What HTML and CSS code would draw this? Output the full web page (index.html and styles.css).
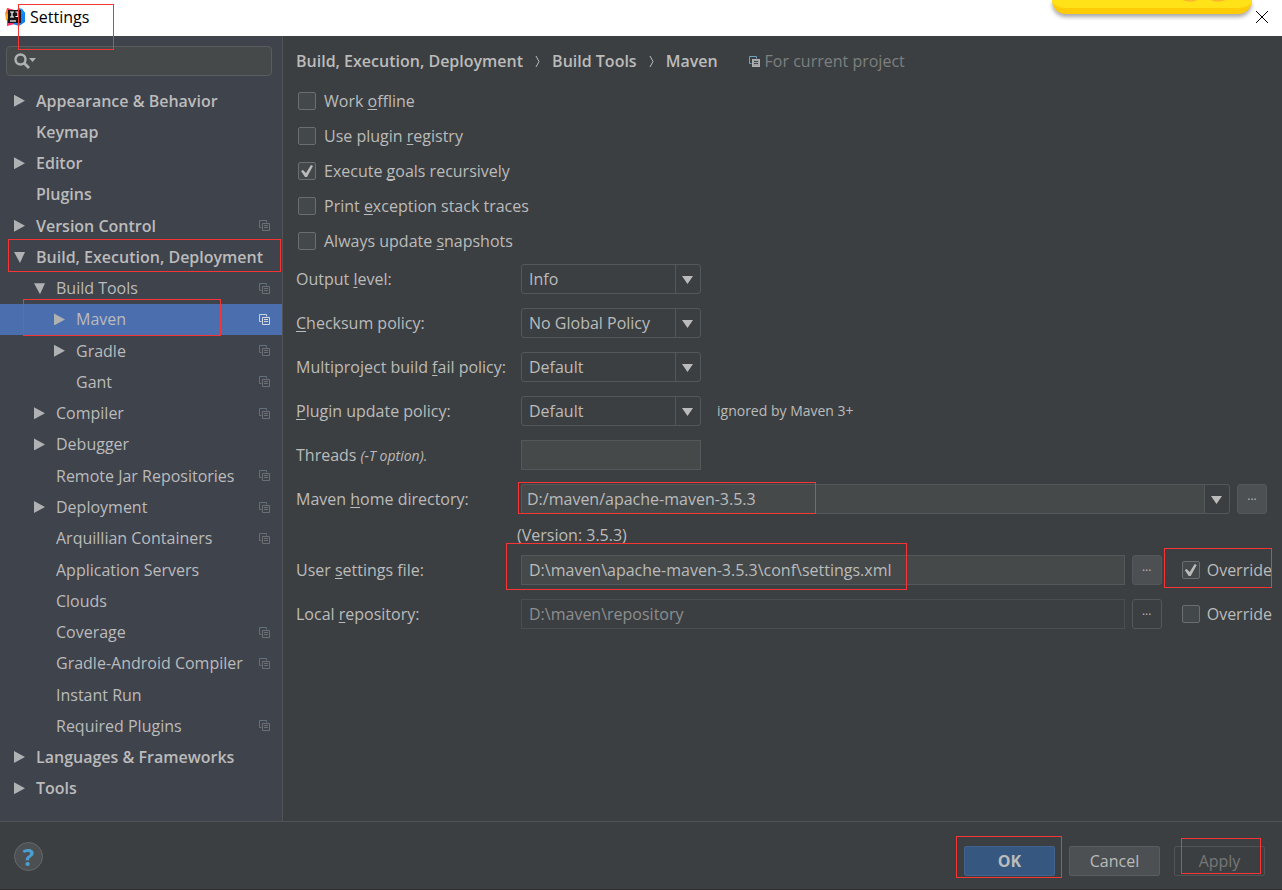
FILE: index.html
```html
<!DOCTYPE html>
<html lang="en">
<head>
<meta charset="utf-8">
<title>Settings</title>
<link rel="stylesheet" href="styles.css">
</head>
<body>
<svg width="0" height="0" class="defs" aria-hidden="true">
  <symbol id="copy" viewBox="0 0 11 11">
    <path d="M2.5 7.5h-2v-7h7v2" fill="none" stroke="var(--back)"/>
    <path d="M3 3h8v8h-8z" fill="var(--sheet)"/>
    <path d="M3.500 3.500h7v7h-7z" fill="none" stroke="var(--front)"/>
    <path d="M5 5.500h4M5 7.500h4" fill="none" stroke="var(--lines)"/>
  </symbol>
</svg>
<header class="titlebar">
  <svg class="logo" viewBox="0 0 20 20" aria-hidden="true">
    <path d="M2 1l7 2-5 6-4-2z" fill="#f8763a"/>
    <path d="M0 6l5 2-1 6-3-1z" fill="#ffa51f"/>
    <path d="M2 19l0-7 8 5z" fill="#fe2d6b"/>
    <path d="M2 1l7 2-5 4z" fill="#f93767"/>
    <path d="M13 1l4 1 3 4v9l-6 4-6-2z" fill="#147ff0"/>
    <path d="M13 1l4 1 3 4-5 2z" fill="#1690fb"/>
    <path d="M3 3h13v13H3z" fill="#151515"/>
    <path d="M5 5h4M7 5v5M5 10h4M10.500 5h3M13 5v4.500h-2.500" fill="none" stroke="#fff" stroke-width="1.200"/>
    <path d="M5 14h6" stroke="#fff" stroke-width="1.200"/>
  </svg>
  <h1 class="title">Settings</h1>
  <span class="mark mark-title"></span>
  <span class="sticker"></span>
  <button class="close" aria-label="Close"><svg viewBox="0 0 12 12"><path d="M0 0l12 12M12 0L0 12" stroke="#000" fill="none"/></svg></button>
</header>

<div class="body">
  <nav class="sidebar" aria-label="Settings sections">
    <label class="search">
      <svg viewBox="0 0 22 16" aria-hidden="true"><circle cx="6.500" cy="6.500" r="5" fill="none" stroke="#afb1b3" stroke-width="2.400"/><path d="M10 10l5 5" stroke="#afb1b3" stroke-width="2.800"/><path d="M15 5h7l-3.500 4z" fill="#afb1b3"/></svg>
      <input type="search" aria-label="Search settings">
    </label>
    <ul class="tree">
      <li class="row top closed">Appearance &amp; Behavior</li>
      <li class="row top">Keymap</li>
      <li class="row top closed">Editor</li>
      <li class="row top">Plugins</li>
      <li class="row top closed">Version Control<svg class="copy"><use href="#copy"/></svg></li>
      <li class="row top open">Build, Execution, Deployment<span class="mark mark-build"></span></li>
      <li class="row sub open">Build Tools<svg class="copy"><use href="#copy"/></svg></li>
      <li class="row leaf closed selected">Maven<svg class="copy"><use href="#copy"/></svg><span class="mark mark-maven"></span></li>
      <li class="row leaf closed">Gradle<svg class="copy"><use href="#copy"/></svg></li>
      <li class="row leaf">Gant<svg class="copy"><use href="#copy"/></svg></li>
      <li class="row sub closed">Compiler<svg class="copy"><use href="#copy"/></svg></li>
      <li class="row sub closed">Debugger</li>
      <li class="row sub">Remote Jar Repositories<svg class="copy"><use href="#copy"/></svg></li>
      <li class="row sub closed">Deployment<svg class="copy"><use href="#copy"/></svg></li>
      <li class="row sub">Arquillian Containers<svg class="copy"><use href="#copy"/></svg></li>
      <li class="row sub">Application Servers</li>
      <li class="row sub">Clouds</li>
      <li class="row sub">Coverage<svg class="copy"><use href="#copy"/></svg></li>
      <li class="row sub">Gradle-Android Compiler<svg class="copy"><use href="#copy"/></svg></li>
      <li class="row sub">Instant Run</li>
      <li class="row sub">Required Plugins<svg class="copy"><use href="#copy"/></svg></li>
      <li class="row top closed">Languages &amp; Frameworks</li>
      <li class="row top closed">Tools</li>
    </ul>
  </nav>

  <main class="content">
    <div class="crumbs">
      <span>Build, Execution, Deployment</span>
      <svg class="chevron" viewBox="0 0 5 11" aria-hidden="true"><path d="M1 0l3 5.500-3 5.500"/></svg>
      <span>Build Tools</span>
      <svg class="chevron" viewBox="0 0 5 11" aria-hidden="true"><path d="M1 0l3 5.500-3 5.500"/></svg>
      <span>Maven</span>
      <span class="scope"><svg class="copy"><use href="#copy"/></svg>For current project</span>
    </div>

    <div class="checks">
      <label class="check"><input type="checkbox"><span>Work <u>o</u>ffline</span></label>
      <label class="check"><input type="checkbox"><span>Use plugin <u>r</u>egistry</span></label>
      <label class="check"><input type="checkbox" checked><span>Execute <u>g</u>oals recursively</span></label>
      <label class="check"><input type="checkbox"><span>Print <u>e</u>xception stack traces</span></label>
      <label class="check"><input type="checkbox"><span>Always update <u>s</u>napshots</span></label>
    </div>

    <div class="form">
      <label for="output">Output <u>l</u>evel:</label>
      <div class="field"><span class="combo"><select id="output"><option>Info</option></select></span></div>
      <label for="checksum"><u>C</u>hecksum policy:</label>
      <div class="field"><span class="combo"><select id="checksum"><option>No Global Policy</option></select></span></div>
      <label for="fail">Multiproject build <u>f</u>ail policy:</label>
      <div class="field"><span class="combo"><select id="fail"><option>Default</option></select></span></div>
      <label for="update"><u>P</u>lugin update policy:</label>
      <div class="field"><span class="combo"><select id="update"><option>Default</option></select></span><span class="hint">ignored by Maven 3+</span></div>
      <label for="threads">Threads <i>(-T option).</i></label>
      <div class="field"><input class="text short" id="threads" type="text"></div>
      <label for="home">Maven <u>h</u>ome directory:</label>
      <div class="field home">
        <span class="combo wide"><input class="text" id="home" type="text" value="D:/maven/apache-maven-3.5.3"><button class="drop" aria-label="Show directories"></button></span>
        <button class="browse" aria-label="Browse home directory">...</button>
        <span class="mark mark-home"></span>
      </div>
      <p class="version">(Version: 3.5.3)</p>
      <label for="settings">User <u>s</u>ettings file:</label>
      <div class="field">
        <input class="text" id="settings" type="text" value="D:\maven\apache-maven-3.5.3\conf\settings.xml">
        <button class="browse" aria-label="Browse settings file">...</button>
        <label class="check override"><input type="checkbox" checked><span>Override</span><span class="mark mark-override"></span></label>
        <span class="mark mark-settings"></span>
      </div>
      <label for="repo">Local <u>r</u>epository:</label>
      <div class="field">
        <input class="text" id="repo" type="text" value="D:\maven\repository" disabled>
        <button class="browse" aria-label="Browse repository" disabled>...</button>
        <label class="check override"><input type="checkbox"><span>Override</span></label>
      </div>
    </div>
  </main>
</div>

<footer class="footer">
  <button class="help" aria-label="Help">?</button>
  <div class="actions">
    <span class="slot"><button class="btn primary">OK</button><span class="mark mark-ok"></span></span>
    <span class="slot"><button class="btn">Cancel</button></span>
    <span class="slot"><button class="btn" disabled>Apply</button><span class="mark mark-apply"></span></span>
  </div>
</footer>
</body>
</html>
```
FILE: styles.css
```css
* { box-sizing: border-box; }

body {
  margin: 0;
  min-height: 100vh;
  display: flex;
  flex-direction: column;
  background: #3c3f41;
  color: #bbbbbb;
  font: 16px/20px "Open Sans", "Noto Sans", sans-serif;
  --back: #63707a;
  --front: #6c6f74;
  --sheet: #3f434c;
  --lines: #6c6f74;
}

button, input, select { font: inherit; color: inherit; margin: 0; }
button { padding: 0; }
.defs { position: absolute; }

/* Annotation frames */
.mark {
  position: absolute;
  border: 1px solid #f73535;
  pointer-events: none;
  z-index: 2;
}

/* Title bar */
.titlebar {
  position: relative;
  display: flex;
  align-items: center;
  height: 36px;
  padding: 0 14px 2px 5px;
  background: #ffffff;
  color: #000000;
}
.logo { width: 20px; height: 20px; margin-right: 5px; }
.title { margin: 0; font-size: 16px; font-weight: 400; }
.mark-title { left: 18px; top: 4px; width: 96px; height: 46px; }
.sticker {
  position: absolute;
  top: 0;
  right: 30px;
  width: 200px;
  height: 14px;
  border-bottom: 6px solid #ffcb05;
  border-radius: 0 0 14px 14px;
  background:
    radial-gradient(ellipse 8px 2px at 138px 0, #fbb62a 60%, transparent),
    radial-gradient(ellipse 8px 2px at 166px 0, #fbb62a 60%, transparent),
    #ffe218;
  box-shadow: 0 3px 4px #00000059;
}
.close {
  width: 12px;
  height: 12px;
  margin-left: auto;
  border: 0;
  background: none;
}
.close svg { display: block; width: 12px; height: 12px; }

.body { flex: 1; display: flex; }

/* Sidebar */
.sidebar {
  flex: 0 0 283px;
  width: 283px;
  display: flex;
  flex-direction: column;
  padding: 10px 0 17px;
  border-right: 1px solid #515456;
  background: #3f434c;
}
.search {
  display: flex;
  align-items: center;
  height: 30px;
  margin: 0 10px 9px 6px;
  padding: 0 7px 1px;
  border: 1px solid #5a5d5e;
  border-radius: 4px;
  background: #45494a;
}
.search svg { flex: none; width: 22px; height: 16px; }
.search input { flex: 1; min-width: 0; border: 0; background: none; outline: 0; }
.tree {
  flex: 1;
  display: grid;
  grid-auto-rows: 1fr;
  margin: 0;
  padding: 0;
  list-style: none;
}
.row {
  position: relative;
  display: flex;
  align-items: center;
  min-height: 24px;
  padding-right: 12px;
  white-space: nowrap;
}
.row::before { content: ""; width: 12px; height: 12px; margin-right: 10px; }
.row.closed::before { background: #afb1b3; clip-path: polygon(0 0, 11px 6px, 0 12px); }
.row.open::before { background: #afb1b3; clip-path: polygon(0 1px, 11px 1px, 6px 12px); }
.top { padding-left: 14px; font-weight: 600; }
.sub { padding-left: 34px; }
.leaf { padding-left: 54px; }
.copy { flex: none; width: 11px; height: 11px; }
.row .copy { margin-left: auto; }
.selected {
  background: #4b6eaf;
  --back: #c3d3e6;
  --front: #d4d6da;
  --sheet: #4b6eaf;
  --lines: #d4d6da;
}
.mark-build { left: 8px; right: 1px; top: -2px; height: 33px; }
.mark-maven { left: 23px; right: 61px; top: -5px; height: 37px; }

/* Content */
.content { flex: 1; min-width: 0; padding: 15px 10px 24px 13px; }
.crumbs { display: flex; align-items: center; font-weight: 600; white-space: nowrap; }
.chevron { width: 5px; height: 11px; margin: 0 12px; fill: none; stroke: #bbbbbb; }
.scope {
  display: flex;
  align-items: center;
  gap: 5px;
  margin-left: 31px;
  color: #7d7f80;
  font-weight: 400;
  --back: #6ba3c0;
  --front: #b0b2b3;
  --sheet: #a0a2a3;
  --lines: #46494b;
}
.checks {
  display: grid;
  justify-items: start;
  gap: 15px;
  padding: 20px 0 13px 2px;
}
.check { display: flex; align-items: center; gap: 8px; white-space: nowrap; }
.check input {
  appearance: none;
  display: grid;
  place-items: center;
  width: 18px;
  height: 18px;
  border: 1px solid #6b6d6e;
  border-radius: 2px;
  background: #43494a;
}
.check input:checked::before {
  content: "";
  width: 12px;
  height: 12px;
  background: #bbbbbb;
  clip-path: polygon(0 6px, 2px 5px, 5px 8px, 10px 0, 12px 1px, 6px 12px, 4px 12px);
}
u { text-underline-offset: 2px; text-decoration-thickness: 1px; text-decoration-skip-ink: none; }

.form {
  display: grid;
  grid-template-columns: 225px 1fr;
  align-items: center;
  row-gap: 14px;
  white-space: nowrap;
}
.form i { font-size: 14px; }
.field { position: relative; display: flex; align-items: center; min-width: 0; height: 30px; }
.combo { position: relative; display: flex; width: 180px; height: 30px; }
.combo select {
  appearance: none;
  width: 100%;
  padding: 0 30px 0 7px;
  border: 1px solid #55585a;
  border-radius: 3px;
  background: #3c3f41;
}
.combo::before {
  content: "";
  position: absolute;
  right: 25px;
  top: 1px;
  bottom: 1px;
  width: 1px;
  background: #55585a;
}
.combo::after {
  content: "";
  position: absolute;
  right: 8px;
  top: 12px;
  width: 11px;
  height: 8px;
  background: #bbbbbb;
  clip-path: polygon(0 0, 100% 0, 50% 100%);
  pointer-events: none;
}
.hint { margin-left: 16px; font-size: 14px; }
.text {
  flex: 1;
  min-width: 0;
  height: 30px;
  padding: 0 7px;
  border: 1px solid #55585a;
  background: #45494a;
}
.text:disabled { border-color: #4b4e50; background: #3c3f41; color: #8c8e8f; }
.short { flex: 0 0 180px; }
.home { padding-right: 5px; }
.wide { flex: 1; }
.wide .text { padding-left: 5px; border-radius: 3px 0 0 3px; border-right: 0; }
.drop { width: 26px; border: 1px solid #55585a; border-radius: 0 3px 3px 0; background: #3c3f41; }
.browse {
  flex: none;
  width: 30px;
  height: 30px;
  margin-left: 7px;
  padding-bottom: 6px;
  border: 1px solid #55585a;
  border-radius: 3px;
  background: #4c5052;
  font-size: 12px;
  line-height: 16px;
}
.browse:disabled { background: #3c3f41; }
.override { position: relative; margin-left: 20px; gap: 7px; }
.version { grid-column: 2; margin: -3px 0 -4px -4px; line-height: 20px; }
.mark-home { left: -3px; top: -2px; width: 298px; height: 32px; }
.mark-settings { left: -15px; top: -12px; width: 401px; height: 47px; }
.mark-override { left: -18px; right: 0; top: -12px; height: 40px; }

/* Footer */
.footer {
  display: flex;
  justify-content: space-between;
  align-items: flex-start;
  min-height: 69px;
  padding: 20px 17px 13px 14px;
  border-top: 1px solid #515456;
  border-bottom: 1px solid #2b2d2e;
}
.help {
  width: 29px;
  height: 29px;
  border: 1px solid #65686a;
  border-radius: 50%;
  background: #4c5052;
  color: #4a9fd0;
  font-size: 24px;
  font-weight: 700;
  line-height: 26px;
}
.actions { display: flex; gap: 14px; padding-top: 4px; }
.slot { position: relative; display: flex; }
.btn {
  width: 91px;
  height: 30px;
  border: 1px solid #5a5d5f;
  border-radius: 2px;
  background: #4c5052;
}
.btn.primary { border-color: #40638f; background: #365880; font-weight: 700; }
.btn:disabled { border-color: #515456; background: #3c3f41; color: #777777; }
.mark-ok { left: -8px; right: -7px; top: -10px; height: 42px; }
.mark-apply { left: 7px; right: 4px; top: -8px; height: 36px; }
```
